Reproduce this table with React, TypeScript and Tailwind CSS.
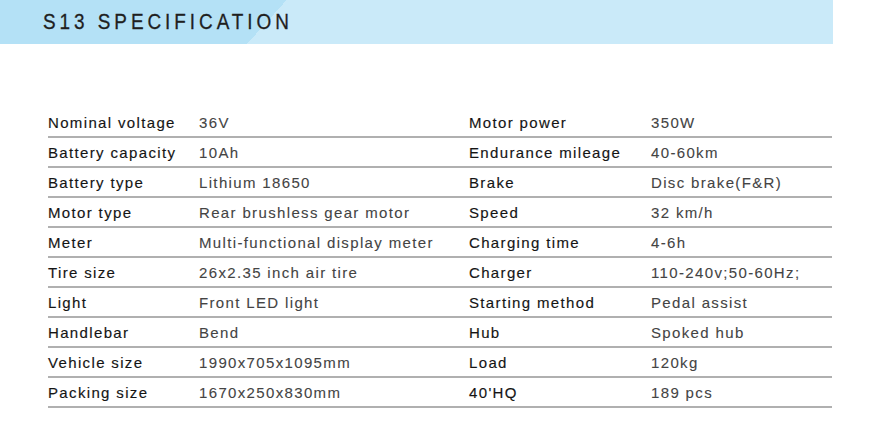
const rows: [string, string, string, string][] = [
  ['Nominal voltage', '36V', 'Motor power', '350W'],
  ['Battery capacity', '10Ah', 'Endurance mileage', '40-60km'],
  ['Battery type', 'Lithium 18650', 'Brake', 'Disc brake(F&R)'],
  ['Motor type', 'Rear brushless gear motor', 'Speed', '32 km/h'],
  ['Meter', 'Multi-functional display meter', 'Charging time', '4-6h'],
  ['Tire size', '26x2.35 inch air tire', 'Charger', '110-240v;50-60Hz;'],
  ['Light', 'Front LED light', 'Starting method', 'Pedal assist'],
  ['Handlebar', 'Bend', 'Hub', 'Spoked hub'],
  ['Vehicle size', '1990x705x1095mm', 'Load', '120kg'],
  ['Packing size', '1670x250x830mm', "40'HQ", '189 pcs'],
];

export default function App() {
  return (
    <div className="w-[873px] h-[434px] bg-white overflow-hidden font-['Liberation_Sans',Arial,sans-serif]">
      {/* title band */}
      <div className="w-[833px] h-[44px] flex items-center pl-[43px] bg-[linear-gradient(132deg,#b4e1f6_213px,#caeaf9_213px)]">
        <h1 className="inline-block origin-left scale-x-[0.86] text-[22px] tracking-[4.6px] text-[#1f1f1f] leading-none whitespace-nowrap [-webkit-text-stroke:0.3px_#1f1f1f]">
          S13 SPECIFICATION
        </h1>
      </div>

      {/* spec table */}
      <div className="ml-[48px] w-[784px] mt-[64px]">
        {rows.map(([l1, v1, l2, v2]) => (
          <div
            key={l1}
            className="h-[30px] flex items-center pt-[3px] border-b-2 border-[#b0b0b0] text-[15px] tracking-[1.35px]"
          >
            <span className="w-[151px] text-[#151515] [-webkit-text-stroke:0.15px_#151515]">{l1}</span>
            <span className="w-[270px] text-[#444] [-webkit-text-stroke:0.1px_#444]">{v1}</span>
            <span className="w-[182px] text-[#151515] [-webkit-text-stroke:0.15px_#151515]">{l2}</span>
            <span className="flex-1 text-[#444] [-webkit-text-stroke:0.1px_#444]">{v2}</span>
          </div>
        ))}
      </div>
    </div>
  );
}
